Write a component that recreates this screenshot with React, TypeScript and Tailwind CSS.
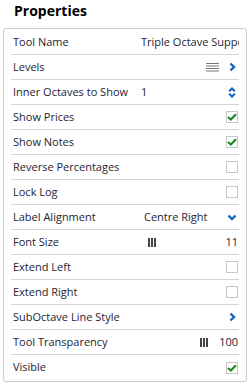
import React from 'react';

type Row = {
    label: string;
    kind: 'text' | 'levels' | 'spin' | 'check' | 'select' | 'slider' | 'nav';
    value?: string;
    checked?: boolean;
    barsLeft?: boolean;
};

const rows: Row[] = [
    { label: 'Tool Name', kind: 'text', value: 'Triple Octave Support' },
    { label: 'Levels', kind: 'levels' },
    { label: 'Inner Octaves to Show', kind: 'spin', value: '1' },
    { label: 'Show Prices', kind: 'check', checked: true },
    { label: 'Show Notes', kind: 'check', checked: true },
    { label: 'Reverse Percentages', kind: 'check' },
    { label: 'Lock Log', kind: 'check' },
    { label: 'Label Alignment', kind: 'select', value: 'Centre Right' },
    { label: 'Font Size', kind: 'slider', value: '11', barsLeft: true },
    { label: 'Extend Left', kind: 'check' },
    { label: 'Extend Right', kind: 'check' },
    { label: 'SubOctave Line Style', kind: 'nav' },
    { label: 'Tool Transparency', kind: 'slider', value: '100' },
    { label: 'Visible', kind: 'check', checked: true },
];

function ChevronRight() {
    return (
        <svg width="7" height="10" viewBox="0 0 7 10" className="block">
            <path d="M1.5 1.5 L5 5 L1.5 8.5" fill="none" stroke="#1565c0" strokeWidth="2.4" />
        </svg>
    );
}

function ChevronDown() {
    return (
        <svg width="10" height="7" viewBox="0 0 10 7" className="block">
            <path d="M1.5 1.5 L5 5 L8.5 1.5" fill="none" stroke="#1565c0" strokeWidth="2.4" />
        </svg>
    );
}

function Spinner() {
    return (
        <svg width="8" height="11" viewBox="0 0 8 11" className="block">
            <path d="M1.2 4.2 L4 1.5 L6.8 4.2" fill="none" stroke="#1565c0" strokeWidth="2.2" />
            <path d="M1.2 6.8 L4 9.5 L6.8 6.8" fill="none" stroke="#1565c0" strokeWidth="2.2" />
        </svg>
    );
}

function Lines() {
    return (
        <svg width="13" height="9" viewBox="0 0 13 9" className="block">
            <rect x="0" y="0" width="13" height="1" fill="#777" />
            <rect x="0" y="2.5" width="13" height="1" fill="#777" />
            <rect x="0" y="5" width="13" height="1" fill="#777" />
            <rect x="0" y="7.5" width="13" height="1" fill="#777" />
        </svg>
    );
}

function Bars() {
    return (
        <svg width="8" height="9" viewBox="0 0 8 9" className="block">
            <rect x="0" y="0" width="2" height="9" fill="#444" />
            <rect x="3" y="0" width="2" height="9" fill="#444" />
            <rect x="6" y="0" width="2" height="9" fill="#444" />
        </svg>
    );
}

function Checkbox({ checked }: { checked?: boolean }) {
    return (
        <div className="w-[12px] h-[12px] border border-[#c8c8c8] bg-white flex items-center justify-center">
            {checked && (
                <svg width="10" height="8" viewBox="0 0 10 8" className="block">
                    <path d="M1 4 L3.8 6.5 L9 1.2" fill="none" stroke="#1c8a1c" strokeWidth="2.2" />
                </svg>
            )}
        </div>
    );
}

function Value({ row }: { row: Row }) {
    switch (row.kind) {
        case 'text':
            return <span className="whitespace-nowrap">{row.value}</span>;
        case 'levels':
            return (
                <div className="flex-1 flex items-center justify-end gap-[10px] pr-[3px]">
                    <Lines />
                    <ChevronRight />
                </div>
            );
        case 'spin':
            return (
                <div className="flex-1 flex items-center justify-between pr-[3px]">
                    <span>{row.value}</span>
                    <Spinner />
                </div>
            );
        case 'check':
            return (
                <div className="flex-1 flex justify-end pr-[1px]">
                    <Checkbox checked={row.checked} />
                </div>
            );
        case 'select':
            return (
                <div className="flex-1 flex items-center justify-between pl-[3px] pr-[2px]">
                    <span>{row.value}</span>
                    <ChevronDown />
                </div>
            );
        case 'slider':
            return row.barsLeft ? (
                <div className="flex-1 flex items-center justify-between pl-[7px] pr-[1px]">
                    <Bars />
                    <span>{row.value}</span>
                </div>
            ) : (
                <div className="flex-1 flex items-center justify-end gap-[11px] pr-[1px]">
                    <Bars />
                    <span>{row.value}</span>
                </div>
            );
        case 'nav':
            return (
                <div className="flex-1 flex justify-end pr-[3px]">
                    <ChevronRight />
                </div>
            );
    }
}

function App() {
    return (
        <div className="w-[251px] h-[385px] bg-white text-[#1e2433] font-['Open_Sans',sans-serif] overflow-hidden">
            <div className="h-[28px] pl-[14px] pt-[1px] text-[14px] leading-[20px] font-bold text-black">
                Properties
            </div>
            <div className="ml-[3px] w-[244px] border border-[#cccccc] rounded-[3px] px-[7px] pt-[1px] pb-[1px]">
                {rows.map((row, i) => (
                    <div
                        key={row.label}
                        className={
                            'h-[25px] flex items-center text-[11px] ' +
                            (i < rows.length - 1 ? 'border-b border-[#d4d4d4]' : '')
                        }
                    >
                        <div className="w-[130px] shrink-0 pl-[2px] whitespace-nowrap overflow-hidden">
                            {row.label}
                        </div>
                        <div className="flex-1 min-w-0 flex items-center overflow-hidden">
                            <Value row={row} />
                        </div>
                    </div>
                ))}
            </div>
        </div>
    );
}

export default App;
